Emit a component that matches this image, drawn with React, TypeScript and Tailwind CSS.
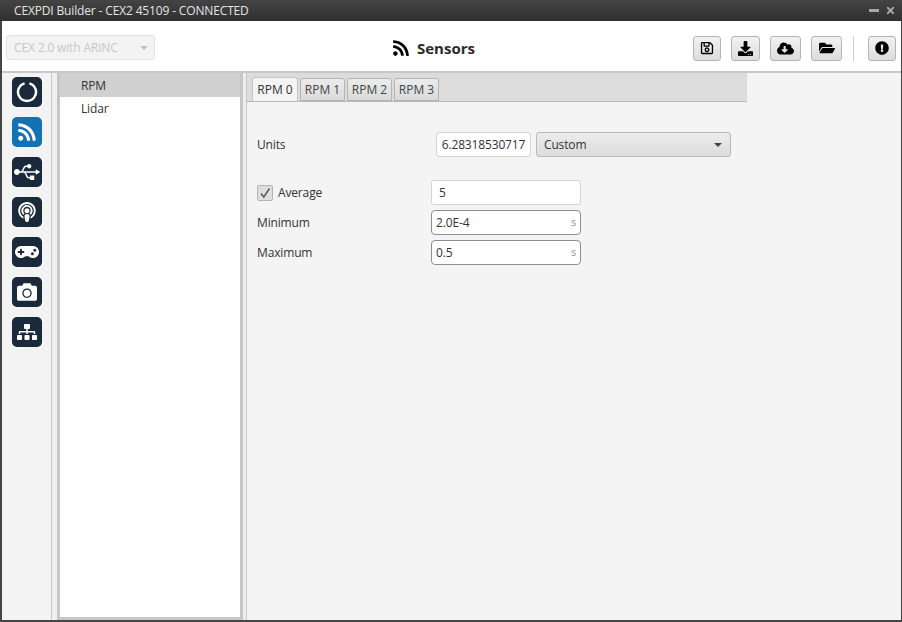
import React from 'react';
import {
  FaCamera,
  FaCloudDownloadAlt,
  FaDownload,
  FaExclamationCircle,
  FaFolderOpen,
  FaGamepad,
  FaPodcast,
  FaRegSave,
  FaRss,
  FaSitemap,
  FaTimes,
  FaUsb,
} from 'react-icons/fa';

const Ring = () => (
  <svg width="22" height="22" viewBox="0 0 22 22" fill="none">
    <path d="M8.6 2.3 A9 9 0 1 0 13.4 2.3" stroke="white" strokeWidth="2.4" />
  </svg>
);

const navItems = [
  { icon: <Ring />, active: false },
  { icon: <FaRss size={20} />, active: true },
  { icon: <FaUsb size={26} />, active: false },
  { icon: <FaPodcast size={20} />, active: false },
  { icon: <FaGamepad size={24} />, active: false },
  { icon: <FaCamera size={20} />, active: false },
  { icon: <FaSitemap size={20} />, active: false },
];

const toolButtons = [
  { icon: <FaRegSave size={14} />, w: 'w-[28px]', ml: 'ml-0' },
  { icon: <FaDownload size={15} />, w: 'w-[29px]', ml: 'ml-[10px]' },
  { icon: <FaCloudDownloadAlt size={17} />, w: 'w-[31px]', ml: 'ml-[10px]' },
  { icon: <FaFolderOpen size={16} />, w: 'w-[31px]', ml: 'ml-[10px]' },
];

const ToolButton = ({ icon, className }: { icon: React.ReactNode; className: string }) => (
  <button className={`h-[25px] flex items-center justify-center rounded-[3px] border border-[#b4b4b4] bg-gradient-to-b from-[#f2f2f2] to-[#dcdcdc] text-black ${className}`}>
    {icon}
  </button>
);

const Tab = ({ label, active }: { label: string; active?: boolean }) => (
  <div
    className={
      active
        ? 'h-[24px] w-[46px] flex items-center justify-center rounded-t-[3px] border border-b-0 border-[#c4c4c4] bg-[#f4f4f4] tracking-normal text-[#333]'
        : 'h-[23px] w-[45px] flex items-center justify-center rounded-t-[3px] border border-[#b4b4b4] bg-gradient-to-b from-[#ececec] to-[#dadada] tracking-normal text-[#444]'
    }
  >
    {label}
  </div>
);

export default function App() {
  return (
    <div className="w-[902px] h-[622px] flex flex-col overflow-hidden bg-[#454545] text-[12px] tracking-[-0.15px] text-[#333]" style={{ fontFamily: '"Open Sans", sans-serif' }}>
      {/* Title bar */}
      <div className="h-[21px] shrink-0 flex items-center justify-between pl-[14px] pr-[6px] bg-gradient-to-b from-[#444444] to-[#303030] text-[#e4e4e4] text-[12px]">
        <span>CEXPDI Builder - CEX2 45109 - CONNECTED</span>
        <div className="flex items-center gap-[6px] text-[#a8a8a8]">
          <div className="w-[10px] h-[3px] bg-[#a8a8a8]" />
          <FaTimes size={11} />
        </div>
      </div>

      <div className="flex-1 flex flex-col ml-[2px] mr-[1px] mb-[2px] bg-white min-h-0">
        {/* Header */}
        <div className="h-[50px] shrink-0 relative flex items-center justify-between pl-[4px] pr-[5px] bg-white">
          <div className="h-[25px] w-[149px] flex items-center justify-between pl-[7px] pr-[6px] rounded-[3px] border border-[#e2e2e2] bg-[#f3f3f3] text-[#c8c8c8] mt-[3px]">
            <span>CEX 2.0 with ARINC</span>
            <div className="w-0 h-0 border-x-[4px] border-x-transparent border-t-[4px] border-t-[#c0c0c0]" />
          </div>
          <div className="flex items-center gap-[7px] text-[15px] tracking-normal font-bold text-[#2b2b2b] absolute left-[390px] top-[16px]">
            <FaRss size={18} className="text-black" />
            <span>Sensors</span>
          </div>
          <div className="flex items-center mt-[4px]">
            {toolButtons.map((b, i) => (
              <ToolButton key={i} icon={b.icon} className={`${b.w} ${b.ml}`} />
            ))}
            <div className="w-px h-[25px] bg-[#d0d0d0] ml-[11px] mr-[14px]" />
            <ToolButton icon={<FaExclamationCircle size={14} />} className="w-[28px]" />
          </div>
        </div>

        <div className="h-[2px] shrink-0 bg-[#c8c8c8]" />

        <div className="flex-1 flex min-h-0 bg-[#f4f4f4]">
          {/* Sidebar */}
          <div className="w-[50px] shrink-0 flex flex-col items-center gap-[10px] pt-[4px] bg-[#f3f3f3] border-r border-[#c8c8c8]">
            {navItems.map((item, i) => (
              <div
                key={i}
                className={`w-[30px] h-[30px] shrink-0 rounded-[5px] flex items-center justify-center text-white ${item.active ? 'bg-[#1272b4]' : 'bg-[#1a2a3a]'}`}
              >
                {item.icon}
              </div>
            ))}
          </div>
          <div className="w-[5px] shrink-0 bg-[#f0f0f0]" />

          {/* List */}
          <div className="w-[186px] shrink-0 bg-white border-x-[3px] border-b-[3px] border-[#c6c6c6] flex flex-col">
            <div className="h-[24px] flex items-center pl-[21px] pt-px bg-[#d0d0d0] text-[#333]">RPM</div>
            <div className="h-[24px] flex items-center pl-[21px] text-[#333]">Lidar</div>
          </div>
          <div className="w-[3px] shrink-0 bg-[#ededed]" />

          {/* Content */}
          <div className="flex-1 min-w-0 flex flex-col border-l border-[#c8c8c8] bg-[#f4f4f4]">
            <div className="h-[29px] w-[500px] shrink-0 flex items-end gap-[2px] pl-[5px] bg-[#dcdcdc] border-b border-[#b8b8b8]">
              <Tab label="RPM 0" active />
              <Tab label="RPM 1" />
              <Tab label="RPM 2" />
              <Tab label="RPM 3" />
            </div>

            <div className="flex items-center h-[25px] mt-[30px] pl-[10px]">
              <span className="w-[179px]">Units</span>
              <div className="h-[25px] w-[95px] flex items-center justify-center rounded-[3px] border border-[#d4d4d4] bg-white">6.28318530717</div>
              <div className="h-[25px] w-[195px] ml-[5px] flex items-center justify-between pl-[7px] pr-[8px] rounded-[3px] border border-[#b8b8b8] bg-gradient-to-b from-[#ececec] to-[#dcdcdc]">
                <span>Custom</span>
                <div className="w-0 h-0 border-x-[4px] border-x-transparent border-t-[4px] border-t-[#444]" />
              </div>
            </div>

            <div className="flex items-center h-[25px] mt-[23px] pl-[10px]">
              <div className="w-[174px] flex items-center gap-[5px]">
                <div className="w-[16px] h-[16px] rounded-[2px] border border-[#b4b4b4] bg-[#dedede] flex items-center justify-center">
                  <svg width="12" height="12" viewBox="0 0 12 12" fill="none">
                    <path d="M2 6.5 L4.8 10 L10.5 1.5" stroke="#555" strokeWidth="1.4" />
                  </svg>
                </div>
                <span>Average</span>
              </div>
              <div className="h-[25px] w-[150px] flex items-center pl-[7px] rounded-[3px] border border-[#d4d4d4] bg-white">5</div>
            </div>

            <div className="flex items-center h-[25px] mt-[5px] pl-[10px]">
              <span className="w-[174px]">Minimum</span>
              <div className="h-[25px] w-[150px] flex items-center justify-between pl-[4px] pr-[4px] rounded-[4px] border border-[#8e8e8e] bg-white">
                <span>2.0E-4</span>
                <span className="text-[#8a9a9a] text-[11px]">s</span>
              </div>
            </div>

            <div className="flex items-center h-[25px] mt-[5px] pl-[10px]">
              <span className="w-[174px]">Maximum</span>
              <div className="h-[25px] w-[150px] flex items-center justify-between pl-[4px] pr-[4px] rounded-[4px] border border-[#8e8e8e] bg-white">
                <span>0.5</span>
                <span className="text-[#8a9a9a] text-[11px]">s</span>
              </div>
            </div>
          </div>
        </div>
      </div>
    </div>
  );
}
